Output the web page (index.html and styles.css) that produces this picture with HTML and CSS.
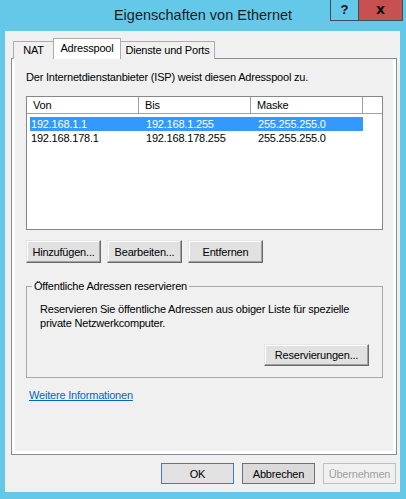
FILE: index.html
```html
<!DOCTYPE html>
<html>
<head>
    <title>Eigenschaften von Ethernet</title>
    <link rel="stylesheet" href="styles.css">
</head>
<body>
    <div class="window">
        <!-- Title bar -->
        <div class="titlebar">
            <div class="title">Eigenschaften von Ethernet</div>
            <div class="caption-buttons">
                <div class="cap help">?</div>
                <div class="cap close">x</div>
            </div>
        </div>

        <div class="client">
            <div class="tabs">
                <div class="tab tab-nat">NAT</div>
                <div class="tab tab-pool active">Adresspool</div>
                <div class="tab tab-ports">Dienste und Ports</div>
            </div>

            <div class="panel">
                <div class="panel-inner">
                    <p class="intro">Der Internetdienstanbieter (ISP) weist diesen Adresspool zu.</p>

                    <!-- Address list -->
                    <div class="listview">
                        <div class="lv-header">
                            <div class="lv-head">Von</div>
                            <div class="lv-head">Bis</div>
                            <div class="lv-head">Maske</div>
                            <div class="lv-head lv-filler"></div>
                        </div>
                        <div class="lv-rows">
                            <div class="lv-row selected">
                                <div class="cell">192.168.1.1</div>
                                <div class="cell">192.168.1.255</div>
                                <div class="cell">255.255.255.0</div>
                            </div>
                            <div class="lv-row">
                                <div class="cell">192.168.178.1</div>
                                <div class="cell">192.168.178.255</div>
                                <div class="cell">255.255.255.0</div>
                            </div>
                        </div>
                    </div>

                    <div class="btn-row">
                        <button type="button" class="btn">Hinzufügen...</button>
                        <button type="button" class="btn">Bearbeiten...</button>
                        <button type="button" class="btn">Entfernen</button>
                    </div>

                    <fieldset class="group">
                        <legend>Öffentliche Adressen reservieren</legend>
                        <p class="group-text">Reservieren Sie öffentliche Adressen aus obiger Liste für spezielle<br>private Netzwerkcomputer.</p>
                        <div class="group-actions">
                            <button type="button" class="btn btn-wide">Reservierungen...</button>
                        </div>
                    </fieldset>

                    <a class="more-link" href="#">Weitere Informationen</a>
                </div>
            </div>

            <div class="dialog-buttons">
                <button type="button" class="dbtn default">OK</button>
                <button type="button" class="dbtn focused">Abbrechen</button>
                <button type="button" class="dbtn" disabled>Übernehmen</button>
            </div>
        </div>
    </div>
</body>
</html>
```

FILE: styles.css
```css
body {
    margin: 0;
    background-color: #64c8e9;
    font-family: "Liberation Sans", Arial, sans-serif;
}
.window {
    width: 406px;
    height: 499px;
}

/* title bar */
.titlebar {
    position: relative;
    height: 31px;
}
.title {
    font-size: 14.5px;
    line-height: 31px;
    text-align: center;
    color: #1e1e1e;
}
.caption-buttons {
    position: absolute;
    top: 0;
    right: 3px;
    display: flex;
}
.cap {
    height: 21px;
    box-sizing: border-box;
    border: 1px solid #3a4f57;
    border-top: none;
    font-weight: bold;
    font-size: 13px;
    line-height: 19px;
    text-align: center;
    color: #111;
}
.help {
    width: 28px;
    border-right: none;
}
.close {
    width: 45px;
    background-color: #c75050;
    font-family: "DejaVu Sans", sans-serif;
    font-size: 14px;
}

/* client area */
.client {
    margin: 0 6px 0 5px;
    height: 461px;
    box-sizing: border-box;
    padding: 7px 3px 0 6px;
    background-color: #f0f0f0;
    font-size: 11px;
    letter-spacing: -0.2px;
    color: #000;
}

/* tabs */
.tabs {
    display: flex;
    align-items: flex-end;
    height: 21px;
    margin-bottom: -1px;
    padding-left: 2px;
}
.tab {
    height: 18px;
    box-sizing: border-box;
    border: 1px solid #acacac;
    border-bottom: none;
    background-color: #f0f0f0;
    line-height: 16px;
    text-align: center;
    margin-left: -1px;
}
.tab-nat { width: 41px; margin-left: 0; }
.tab-pool { width: 68px; }
.tab-ports { width: 95px; }
.tab.active {
    position: relative;
    z-index: 1;
    height: 21px;
    background-color: #fff;
    line-height: 18px;
}

.panel {
    height: 397px;
    box-sizing: border-box;
    border: 1px solid #898c95;
    background-color: #fff;
}
.panel-inner {
    height: 100%;
    box-sizing: border-box;
    margin: 0 3px;
    padding: 12px 10px 0 11px;
    background-color: #f0f0f0;
    height: 392px;
}
.intro {
    margin: 0;
    line-height: 13px;
}

/* list view */
.listview {
    margin-top: 12px;
    height: 134px;
    box-sizing: border-box;
    border: 1px solid #828790;
    background-color: #fff;
}
.lv-header {
    display: grid;
    grid-template-columns: 112px 112px 112px 1fr;
    height: 17px;
    box-sizing: border-box;
    border-bottom: 1px solid #a0a0a0;
}
.lv-head {
    border-right: 1px solid #a0a0a0;
    padding-left: 6px;
    line-height: 16px;
}
.lv-filler {
    border-right: none;
}
.lv-rows {
    padding-top: 3px;
}
.lv-row {
    display: grid;
    grid-template-columns: 108px 112px 113px;
    width: 333px;
    margin-left: 3px;
    height: 14px;
    line-height: 14px;
}
.lv-row .cell {
    padding-left: 8px;
}
.lv-row .cell:first-child {
    padding-left: 1px;
}
.lv-row.selected {
    background-color: #3399ff;
    color: #fff;
}

/* buttons */
.btn-row {
    display: flex;
    gap: 6px;
    margin-top: 10px;
}
.btn {
    width: 75px;
    height: 23px;
    box-sizing: border-box;
    border: 1px solid;
    border-color: #e6e6e6 #696969 #696969 #e6e6e6;
    box-shadow: inset -1px -1px 0 #a0a0a0, inset 1px 1px 0 #fff;
    background-color: #e1e1e1;
    font-family: inherit;
    font-size: 11px;
    letter-spacing: -0.2px;
    color: #000;
    padding: 0;
}
.btn-wide {
    width: 105px;
    height: 22px;
}

/* group box */
.group {
    margin: 17px 0 0 0;
    padding: 9px 13px 11px 13px;
    border: 1px solid #a9a9a9;
    min-width: 0;
}
.group legend {
    margin-left: -8px;
    padding: 0 2px;
    line-height: 13px;
}
.group-text {
    margin: 0;
    line-height: 14px;
}
.group-actions {
    display: flex;
    justify-content: flex-end;
    margin-top: 14px;
}

.more-link {
    display: inline-block;
    margin: 11px 0 0 3px;
    line-height: 13px;
    color: #0066cc;
}

/* dialog buttons */
.dialog-buttons {
    display: flex;
    justify-content: flex-end;
    gap: 8px;
    margin-top: 8px;
    margin-right: 1px;
}
.dbtn {
    width: 73px;
    height: 21px;
    box-sizing: border-box;
    border: 1px solid #adadad;
    background-color: #e1e1e1;
    font-family: inherit;
    font-size: 11px;
    letter-spacing: -0.2px;
    color: #000;
    padding: 0;
}
.dbtn.default {
    border-color: #3c7fb1;
    background-color: #e1e1e1;
}
.dbtn.focused {
    border-color: #707070;
    background-color: #dadada;
}
.dbtn:disabled {
    border-color: #bfbfbf;
    background-color: #f0f0f0;
    color: #a0a0a0;
}
```
